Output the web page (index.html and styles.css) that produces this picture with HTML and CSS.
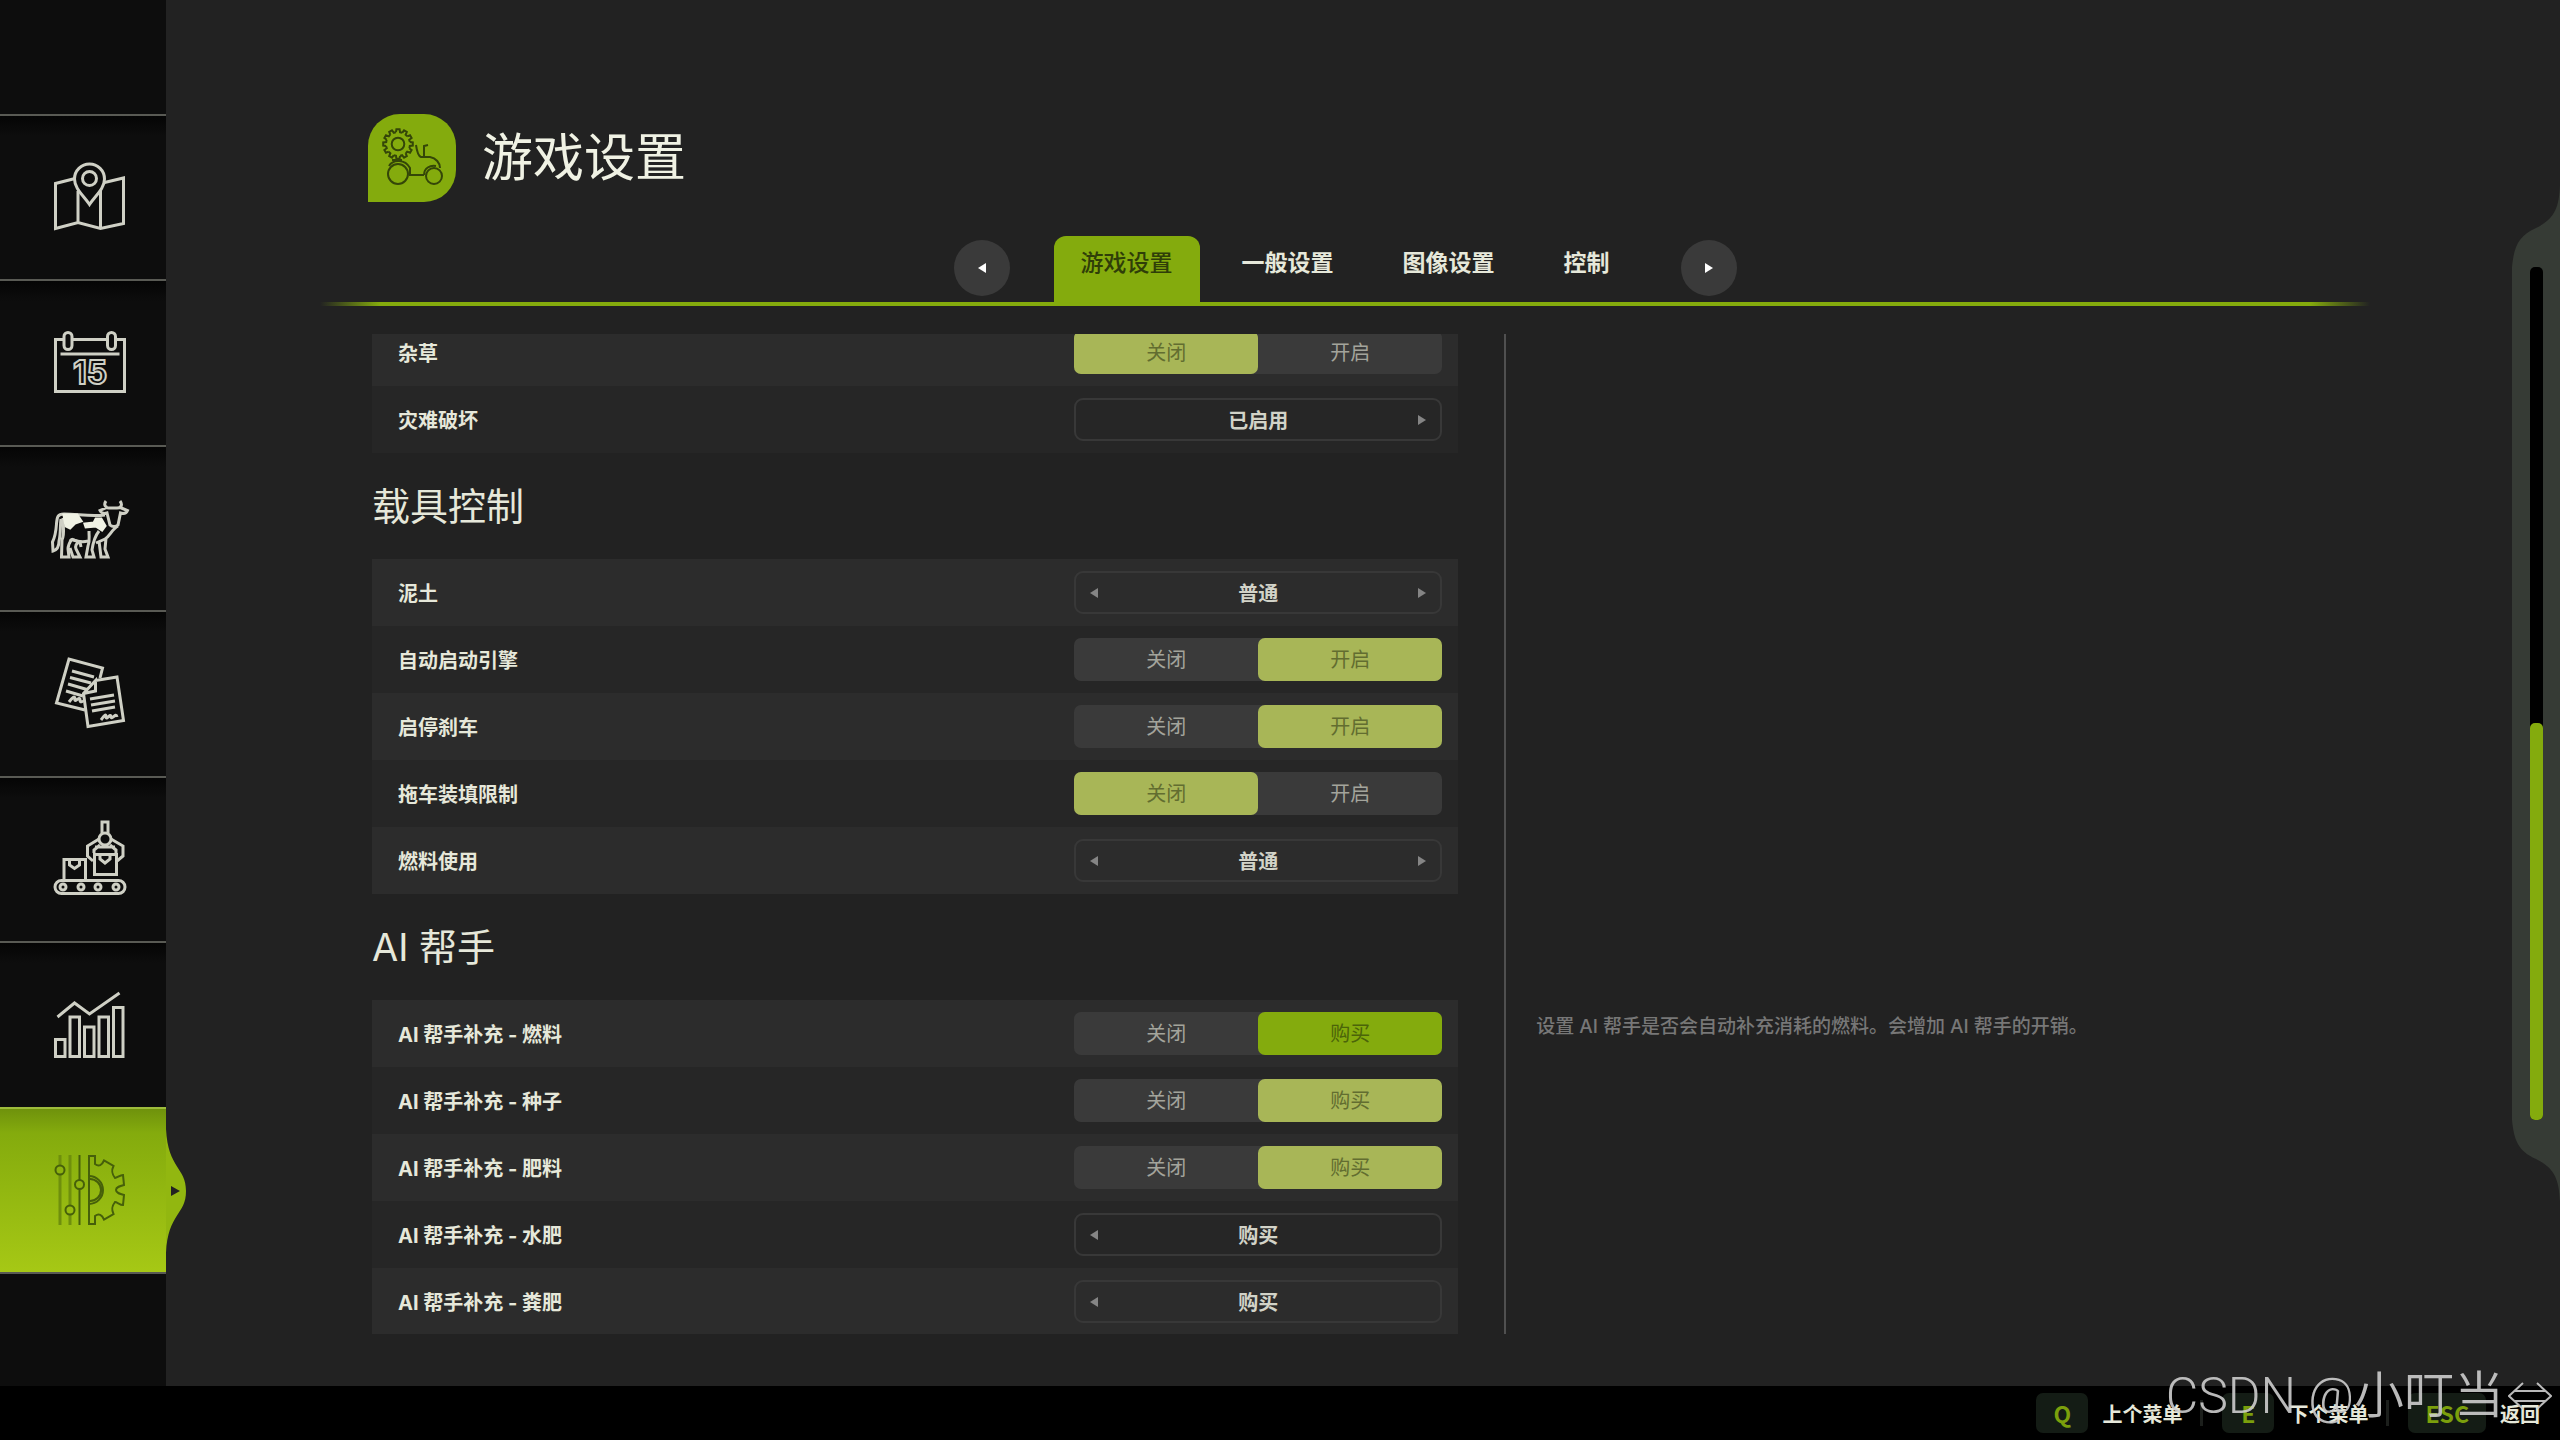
FILE: index.html
```html
<!DOCTYPE html>
<html lang="zh-CN">

<head>
    <meta charset="UTF-8">
    <meta name="viewport" content="width=device-width, initial-scale=1.0">
    <title>游戏设置</title>
    <link rel="stylesheet" href="styles.css">
</head>

<body>
    <div class="screen">
        <nav class="sidebar">
            <a class="nav-item" href="#map" aria-label="地图">
                <svg class="nav-icon" viewBox="0 0 80 72">
                    <path d="M25 16.500L5.500 21.500V66.500L28 60.500L50.500 66.500L73.500 61.500V16L54.500 20.500M28 29V60.500M50.500 28V66.500" />
                    <path d="M39.500 42.500C34 34 24.500 27 24.500 17A15 15 0 0 1 54.500 17C54.500 27 45 34 39.500 42.500Z" />
                    <circle cx="39.500" cy="16.500" r="7" />
                </svg>
            </a>
            <a class="nav-item" href="#calendar" aria-label="日历">
                <svg class="nav-icon" viewBox="0 0 80 72">
                    <path d="M14 12.500H5.500V64.500H74.500V12.500H66M22 12.500H57M10.500 27H69.500" />
                    <rect x="14" y="5.500" width="8" height="17" rx="4" />
                    <rect x="57.500" y="5.500" width="8" height="17" rx="4" />
                    <text class="day" x="40" y="57" text-anchor="middle">15</text>
                </svg>
            </a>
            <a class="nav-item" href="#animals" aria-label="动物">
                <svg class="nav-icon" viewBox="0 0 80 72">
                    <path d="M56 8C53 12 56 15 59 15H67C71 15 73 12 70 8M58 14L50 17.500C51 20 54 21 57 20L60 32C62 34 66 34 68 32L70.500 20C74 21 76.500 20 77.500 17.500L69 14" />
                    <path d="M55 22C40 24 28 21 14 21C7 21 7 25 6.500 31C6 38 5 44 2.500 49L3 58C7 57 9 53 9 48C11 40 10 32 11 26" />
                    <path d="M13 25C13 36 15 40 12 47L11.500 64H19L18 56C18 51 22 46 21.500 46.500L30 49C26 50 25 53 26 56L30 64H23L20 55" />
                    <path d="M21.500 46C28 49 34 49 38 48M39 38C39 46 40 48 38 53L36 64H44L42 57C43 50 45 43 49 38" />
                    <path d="M68 33C62 36 60 43 55 46L46 50M49 48L51 64H58L55 56L56 45M30 49L31 54" />
                    <path class="solid" d="M14 22H27L31 28L25 30L20 35L16 33Z" />
                    <path class="solid" d="M35 31L44 30L46 26L51 26L55 33L52 37L46 33L36 34Z" />
                </svg>
            </a>
            <a class="nav-item" href="#contracts" aria-label="合同">
                <svg class="nav-icon" viewBox="0 0 80 72">
                    <path d="M50 20L52.500 10L19 1L6.500 45L35 52" />
                    <path d="M22 13L44 19M20 19.500L41 25M18 26L37 31.500M16 33L33 38" />
                    <path d="M19 44C22 40 25 37 25 41C24 46 30 37 30 42C30 46 33 42 34 44" />
                    <path d="M45.500 22.500L67 19L73.500 62.500L38 68.500L33.500 35.500L45.500 22.500V33L33.500 35.500" />
                    <path d="M40 41L64 37M41 47L65 43M42 53L65 49M51 62C54 58 56 55 56 59C56 63 61 54 61 59C62 62 66 54 67 59" />
                </svg>
            </a>
            <a class="nav-item" href="#production" aria-label="生产">
                <svg class="nav-icon" viewBox="0 0 80 72">
                    <rect x="5" y="57.500" width="70" height="13" rx="6.500" />
                    <circle cx="13" cy="64" r="3" />
                    <circle cx="31" cy="64" r="3" />
                    <circle cx="48" cy="64" r="3" />
                    <circle cx="66" cy="64" r="3" />
                    <path d="M14 57V36.500H35.500V57M19.500 37V42L24.500 45.500L29.500 42V37" />
                    <path d="M44.500 31.500H66.500V51.500H44.500ZM50 32V36L55 40L60 36V32M52 10V-1H58V10" />
                    <circle cx="55" cy="16" r="6" />
                    <path d="M49 16L37.500 23V33L43 38M61 16L73 23V33L67 38M44 30V27L50 22M66 30V27L60 22M45 24H65" />
                </svg>
            </a>
            <a class="nav-item" href="#statistics" aria-label="统计">
                <svg class="nav-icon" viewBox="0 0 80 72">
                    <path d="M7.500 28L24.500 14L39.500 25L69.500 4" />
                    <path d="M5.500 50.500H15V67.500H5.500ZM20 28H29.500V67.500H20ZM34.500 38H44V67.500H34.500ZM49 28H58.500V67.500H49ZM63.500 18.500H73V67.500H63.500Z" />
                </svg>
            </a>
            <a class="nav-item active" href="#settings" aria-label="设置" aria-current="page">
                <svg class="nav-icon" viewBox="0 0 80 72">
                    <path class="faint" d="M10 1V11M10 21V71M20 1V51M20 61V71" />
                    <path d="M29.500 1V26M29.500 35V71" />
                    <circle cx="10" cy="16" r="4.500" />
                    <circle cx="20" cy="56" r="4.500" />
                    <circle cx="29.500" cy="30.500" r="4.500" />
                    <path d="M39 22V2H45V10C49 13 52 11 54 6.500L63.500 12C61 17 62 20 65 24C67 24 70 21 73 21L74 31C70 32 66 33 66 36C66 39 70 40 74 41L73 51C70 51 67 48 65 48C62 52 61 55 63.500 60L54 65.500C52 61 49 59 45 62V70H39V50" />
                    <path d="M39 22A14 14 0 0 1 39 50ZM40 25A11 11 0 0 1 40 47" />
                </svg>
                <svg class="bump" viewBox="0 0 20 124">
                    <path class="bump-shape" d="M0 0C2 40 20 38 20 62C20 86 2 84 0 124Z" />
                    <path class="bump-arrow" d="M5 57L14 62L5 67Z" />
                </svg>
            </a>
        </nav>

        <main class="main">
            <header class="page-header">
                <svg class="page-icon" viewBox="0 0 88 88">
                    <defs>
                        <path id="tooth" d="M-2 -11.800L-1.600 -14.800H1.600L2 -11.800A12 12 0 0 1 4.100 -11.300" />
                    </defs>
                    <g transform="translate(30 30)">
                        <use href="#tooth" />
                        <use href="#tooth" transform="rotate(30)" />
                        <use href="#tooth" transform="rotate(60)" />
                        <use href="#tooth" transform="rotate(90)" />
                        <use href="#tooth" transform="rotate(120)" />
                        <use href="#tooth" transform="rotate(150)" />
                        <use href="#tooth" transform="rotate(180)" />
                        <use href="#tooth" transform="rotate(210)" />
                        <use href="#tooth" transform="rotate(240)" />
                        <use href="#tooth" transform="rotate(270)" />
                        <use href="#tooth" transform="rotate(300)" />
                        <use href="#tooth" transform="rotate(330)" />
                        <circle r="6.300" />
                    </g>
                    <circle cx="30" cy="60" r="10" />
                    <circle cx="66" cy="62" r="8" />
                    <path d="M21 52C25 45 37 45 42 54V61H56M56 61C56 54 62 51 68 52M24 46H34M48 31C49 38 50 42 53 43H62C68 44 72 49 72 54M60 31L56 32V42" />
                </svg>
                <h1>游戏设置</h1>
            </header>

            <div class="tab-bar">
                <button class="tab-arrow" type="button" aria-label="上一页"><span class="arrow left"></span></button>
                <div class="tabs" role="tablist">
                    <button class="tab active" type="button" role="tab" aria-selected="true">游戏设置</button>
                    <button class="tab" type="button" role="tab" aria-selected="false">一般设置</button>
                    <button class="tab" type="button" role="tab" aria-selected="false">图像设置</button>
                    <button class="tab" type="button" role="tab" aria-selected="false">控制</button>
                </div>
                <button class="tab-arrow" type="button" aria-label="下一页"><span class="arrow right"></span></button>
            </div>

            <div class="content">
                <form class="settings">
                    <div class="group scrolled">
                        <div class="row">
                            <span class="row-label" id="l-weeds">杂草</span>
                            <div class="toggle" role="radiogroup" aria-labelledby="l-weeds">
                                <input type="radio" name="weeds" id="weeds-off" checked><label for="weeds-off">关闭</label>
                                <input type="radio" name="weeds" id="weeds-on"><label for="weeds-on">开启</label>
                            </div>
                        </div>
                        <div class="row">
                            <label class="row-label" for="disaster">灾难破坏</label>
                            <div class="option">
                                <output id="disaster">已启用</output>
                                <button class="step next" type="button" aria-label="下一个"><span class="arrow right"></span></button>
                            </div>
                        </div>
                    </div>

                    <h2>载具控制</h2>
                    <div class="group">
                        <div class="row">
                            <label class="row-label" for="dirt">泥土</label>
                            <div class="option">
                                <button class="step prev" type="button" aria-label="上一个"><span class="arrow left"></span></button>
                                <output id="dirt">普通</output>
                                <button class="step next" type="button" aria-label="下一个"><span class="arrow right"></span></button>
                            </div>
                        </div>
                        <div class="row">
                            <span class="row-label" id="l-engine">自动启动引擎</span>
                            <div class="toggle" role="radiogroup" aria-labelledby="l-engine">
                                <input type="radio" name="engine" id="engine-off"><label for="engine-off">关闭</label>
                                <input type="radio" name="engine" id="engine-on" checked><label for="engine-on">开启</label>
                            </div>
                        </div>
                        <div class="row">
                            <span class="row-label" id="l-brake">启停刹车</span>
                            <div class="toggle" role="radiogroup" aria-labelledby="l-brake">
                                <input type="radio" name="brake" id="brake-off"><label for="brake-off">关闭</label>
                                <input type="radio" name="brake" id="brake-on" checked><label for="brake-on">开启</label>
                            </div>
                        </div>
                        <div class="row">
                            <span class="row-label" id="l-trailer">拖车装填限制</span>
                            <div class="toggle" role="radiogroup" aria-labelledby="l-trailer">
                                <input type="radio" name="trailer" id="trailer-off" checked><label for="trailer-off">关闭</label>
                                <input type="radio" name="trailer" id="trailer-on"><label for="trailer-on">开启</label>
                            </div>
                        </div>
                        <div class="row">
                            <label class="row-label" for="fuel">燃料使用</label>
                            <div class="option">
                                <button class="step prev" type="button" aria-label="上一个"><span class="arrow left"></span></button>
                                <output id="fuel">普通</output>
                                <button class="step next" type="button" aria-label="下一个"><span class="arrow right"></span></button>
                            </div>
                        </div>
                    </div>

                    <h2>AI 帮手</h2>
                    <div class="group">
                        <div class="row selected">
                            <span class="row-label" id="l-ai-fuel">AI 帮手补充 - 燃料</span>
                            <div class="toggle" role="radiogroup" aria-labelledby="l-ai-fuel">
                                <input type="radio" name="ai-fuel" id="ai-fuel-off"><label for="ai-fuel-off">关闭</label>
                                <input type="radio" name="ai-fuel" id="ai-fuel-buy" checked><label for="ai-fuel-buy">购买</label>
                            </div>
                        </div>
                        <div class="row">
                            <span class="row-label" id="l-ai-seed">AI 帮手补充 - 种子</span>
                            <div class="toggle" role="radiogroup" aria-labelledby="l-ai-seed">
                                <input type="radio" name="ai-seed" id="ai-seed-off"><label for="ai-seed-off">关闭</label>
                                <input type="radio" name="ai-seed" id="ai-seed-buy" checked><label for="ai-seed-buy">购买</label>
                            </div>
                        </div>
                        <div class="row">
                            <span class="row-label" id="l-ai-fert">AI 帮手补充 - 肥料</span>
                            <div class="toggle" role="radiogroup" aria-labelledby="l-ai-fert">
                                <input type="radio" name="ai-fert" id="ai-fert-off"><label for="ai-fert-off">关闭</label>
                                <input type="radio" name="ai-fert" id="ai-fert-buy" checked><label for="ai-fert-buy">购买</label>
                            </div>
                        </div>
                        <div class="row">
                            <label class="row-label" for="ai-slurry">AI 帮手补充 - 水肥</label>
                            <div class="option">
                                <button class="step prev" type="button" aria-label="上一个"><span class="arrow left"></span></button>
                                <output id="ai-slurry">购买</output>
                            </div>
                        </div>
                        <div class="row">
                            <label class="row-label" for="ai-manure">AI 帮手补充 - 粪肥</label>
                            <div class="option">
                                <button class="step prev" type="button" aria-label="上一个"><span class="arrow left"></span></button>
                                <output id="ai-manure">购买</output>
                            </div>
                        </div>
                    </div>
                </form>

                <aside class="details">
                    <p>设置 AI 帮手是否会自动补充消耗的燃料。会增加 AI 帮手的开销。</p>
                </aside>
            </div>
        </main>

        <div class="scroll-panel">
            <svg class="cap" viewBox="0 0 48 82">
                <path d="M48 0C47 24 42 34 24 43C6 51 2 62 0 82H48Z" />
            </svg>
            <div class="track-wrap">
                <div class="track">
                    <div class="thumb"></div>
                </div>
            </div>
            <svg class="cap" viewBox="0 0 48 82">
                <path d="M48 82C47 58 42 48 24 39C6 31 2 20 0 0H48Z" />
            </svg>
        </div>
    </div>

    <footer class="bottom-bar">
        <button class="hint" type="button"><kbd>Q</kbd><span>上个菜单</span></button>
        <button class="hint" type="button"><kbd>E</kbd><span>下个菜单</span></button>
        <button class="hint" type="button"><kbd>ESC</kbd><span>返回</span></button>
    </footer>

    <div class="watermark">
        <span>CSDN @小叮当</span>
        <svg viewBox="0 0 44 28">
            <path d="M15 1L1 14L15 27M29 1L43 14L29 27M7 9H37M7 19H37" />
        </svg>
    </div>
</body>

</html>
```

FILE: styles.css
```css
* {
    box-sizing: border-box;
}

body {
    display: flex;
    flex-direction: column;
    height: 100vh;
    margin: 0;
    overflow: hidden;
    background: #222;
    color: #e6e8da;
    font-family: Inter, "Noto Sans CJK SC", sans-serif;
    font-size: 20px;
}

button {
    padding: 0;
    border: none;
    background: none;
    color: inherit;
    font: inherit;
    cursor: pointer;
}

h1,
h2,
p {
    margin: 0;
    font-weight: 400;
}

.screen {
    display: flex;
    flex: 1;
    min-height: 0;
}

/* 左侧导航 */
.sidebar {
    display: flex;
    flex-direction: column;
    width: 166px;
    padding: 114px 0;
    background: #0d0d0d;
}

.nav-item {
    position: relative;
    display: flex;
    flex: 1;
    align-items: center;
    justify-content: center;
    padding-left: 14px;
    border-top: 2px solid #595a54;
    background: linear-gradient(#050505, #0d0d0d 20px);
}

.nav-icon {
    width: 80px;
    height: 72px;
    overflow: visible;
    fill: none;
    stroke: #cfd0c5;
    stroke-width: 3;
}

.nav-icon .solid {
    fill: #f0f2e4;
    stroke: #f0f2e4;
}

.nav-icon .day {
    font-family: Inter, sans-serif;
    font-size: 32px;
    font-weight: 700;
    stroke-width: 2;
}

.nav-item.active {
    border-top-color: #9dbb3c;
    background: linear-gradient(#6f920c, #84ab0d 24px, #a6c815);
    box-shadow: 0 2px 0 #595a54;
}

.nav-item.active .nav-icon {
    stroke: #46600a;
    stroke-width: 2;
}

.nav-item.active .faint {
    stroke: #6f8f0c;
    stroke-width: 3;
}

.bump {
    position: absolute;
    left: 100%;
    top: 20px;
    width: 20px;
    height: 124px;
}

.bump-shape {
    fill: #92b710;
}

.bump-arrow {
    fill: #222;
}

/* 主区域 */
.main {
    display: flex;
    flex: 1;
    flex-direction: column;
    min-width: 0;
    padding: 114px 142px 52px 154px;
}

.page-header {
    display: flex;
    gap: 26px;
    margin: 0 0 34px 48px;
}

.page-icon {
    width: 88px;
    height: 88px;
    border-radius: 32px 32px 32px 0;
    background: #84ab0d;
    fill: none;
    stroke: #344608;
    stroke-width: 2;
}

h1 {
    color: #f0f2e4;
    font-size: 51px;
    line-height: 88px;
}

.tab-bar {
    display: flex;
    justify-content: center;
    gap: 44px;
    padding-bottom: 4px;
    background: linear-gradient(90deg, transparent, #84ab0d 60px, #84ab0d calc(100% - 60px), transparent) bottom / 100% 4px no-repeat;
}

.tab-arrow {
    display: flex;
    align-items: center;
    justify-content: center;
    width: 56px;
    height: 56px;
    margin-top: 4px;
    border-radius: 50%;
    background: #3a3a3a;
    color: #fff;
}

.tabs {
    display: flex;
    gap: 15px;
}

.tab {
    height: 66px;
    padding: 0 27px 12px;
    border-radius: 12px 12px 0 0;
    font-size: 23px;
    font-weight: 700;
    line-height: 30px;
}

.tab.active {
    background: #84ab0d;
    color: #2f3e08;
    font-weight: 500;
}

.arrow {
    display: block;
    border: 5px solid transparent;
}

.arrow.left {
    border-left: 0;
    border-right: 8px solid currentColor;
}

.arrow.right {
    border-right: 0;
    border-left: 8px solid currentColor;
}

.content {
    display: grid;
    flex: 1;
    grid-template-columns: 17fr 13fr;
    min-height: 0;
    margin: 28px 0 0 52px;
}

.settings {
    padding-right: 46px;
    overflow: hidden;
}

.group.scrolled {
    margin-top: -15px;
}

h2 {
    color: #e6e8da;
    font-size: 38px;
    line-height: 106px;
}

.row {
    display: flex;
    align-items: center;
    justify-content: space-between;
    height: 67px;
    padding: 0 16px 0 26px;
    background: #262626;
}

.row:nth-child(odd) {
    background: #2c2c2c;
}

.row-label {
    font-weight: 700;
}

.toggle,
.option {
    position: relative;
    display: flex;
    width: 368px;
    height: 43px;
}

.toggle {
    border-radius: 7px;
    background: #3a3a3a;
}

.toggle input {
    position: absolute;
    margin: 0;
    opacity: 0;
}

.toggle label {
    flex: 1;
    border-radius: 7px;
    color: #a3a49c;
    line-height: 44px;
    text-align: center;
}

.toggle input:checked + label {
    background: #a8b657;
    color: #626d30;
}

.selected .toggle input:checked + label {
    background: #84ab0d;
    color: #4b6409;
}

.option {
    align-items: center;
    justify-content: center;
    border: 2px solid #383838;
    border-radius: 9px;
    color: #d2d3c8;
    font-weight: 700;
}

.step {
    position: absolute;
    padding: 14px;
    color: #858585;
}

.step.prev {
    left: 0;
}

.step.next {
    right: 0;
}

.details {
    padding: 679px 0 0 30px;
    border-left: 2px solid #505050;
    color: #777;
}

.details p {
    font-size: 19px;
    font-weight: 500;
    line-height: 28px;
}

/* 右侧滚动条 */
.scroll-panel {
    display: flex;
    flex-direction: column;
    width: 48px;
    margin: 185px 0 184px;
}

.cap {
    display: block;
    width: 48px;
    height: 82px;
    fill: #363b35;
}

.track-wrap {
    display: flex;
    flex: 1;
    justify-content: center;
    background: #363b35;
}

.track {
    display: flex;
    align-items: flex-end;
    width: 13px;
    border-radius: 5px;
    background: #000;
}

.thumb {
    width: 100%;
    height: 46.5%;
    border-radius: 5px;
    background: #84ab0d;
}

/* 底部按键提示 */
.bottom-bar {
    display: flex;
    align-items: center;
    justify-content: flex-end;
    height: 54px;
    padding: 0 20px 0 0;
    background: #000;
}

.hint {
    display: flex;
    align-items: center;
    gap: 14px;
    font-weight: 700;
}

.hint + .hint::before {
    content: "";
    width: 3px;
    height: 26px;
    margin: 0 5px 0 18px;
    background: #1c1f1c;
}

.hint kbd {
    min-width: 52px;
    padding: 0 17px;
    border-radius: 7px;
    background: #141c15;
    color: #7b9f0c;
    font-family: "Noto Sans CJK SC", sans-serif;
    font-size: 23px;
    line-height: 40px;
}

.watermark {
    position: absolute;
    right: 8px;
    bottom: 8px;
    display: flex;
    align-items: center;
    gap: 4px;
    color: rgba(205, 205, 205, 0.9);
    font-family: Roboto, "Noto Sans CJK SC", sans-serif;
    font-size: 50px;
    font-weight: 350;
    line-height: 72px;
    pointer-events: none;
}

.watermark svg {
    width: 44px;
    height: 28px;
    fill: none;
    stroke: currentColor;
    stroke-width: 2;
}
```
